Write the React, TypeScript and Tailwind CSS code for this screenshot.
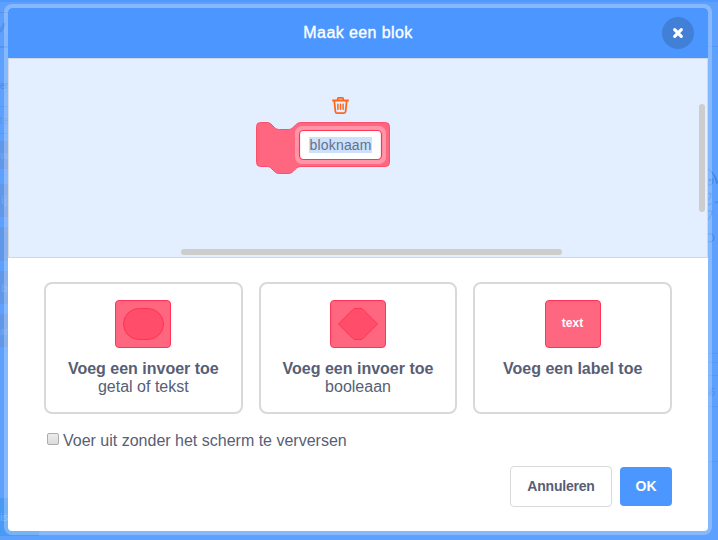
import type { ReactNode } from "react";

function Backdrop() {
  return (
    <svg className="absolute inset-0" width="718" height="540" viewBox="0 0 718 540" fill="none">
      <rect width="718" height="540" fill="#5ea0fe" />
      <rect width="718" height="2" fill="#4f98ff" />
      <rect y="12" width="8" height="1" fill="#5592e8" />
      <path d="M0 32 L5 23" stroke="#5290ea" strokeWidth="3" />
      <rect y="46" width="8" height="2" fill="#5592e8" />
      <g fontSize="11" fontFamily="Liberation Sans, sans-serif">
        <text x="0" y="89" textLength="8" lengthAdjust="spacingAndGlyphs" fill="#4b86dc">er</text>
        <text x="0" y="124" textLength="8" lengthAdjust="spacingAndGlyphs" fill="#5590e5">t e</text>
      </g>
      <rect y="106" width="8" height="1" fill="#5898f5" />
      <rect y="133" width="8" height="1" fill="#5898f5" />
      <g fill="#6097e8">
        <rect y="141" width="8" height="28" />
        <rect y="184" width="8" height="33" />
        <rect y="227" width="8" height="34" />
        <rect y="271" width="8" height="33" />
        <rect y="314" width="8" height="33" />
      </g>
      <g fontSize="11" fontWeight="700" fontFamily="Liberation Sans, sans-serif" fill="#6ea5f3">
        <text x="0" y="159" textLength="8" lengthAdjust="spacingAndGlyphs">va</text>
        <text x="1" y="204">ij</text>
        <text x="1" y="292">b</text>
        <text x="0" y="335" textLength="8" lengthAdjust="spacingAndGlyphs">ar</text>
      </g>
      <rect y="498" width="39" height="38" fill="#4a9af5" />
      <text x="0" y="521" fontSize="11" fontFamily="Liberation Sans, sans-serif" fill="#75b2fb">is</text>
      <rect x="708" y="46" width="10" height="1" fill="#5696f2" />
      <g stroke="#4384e3" strokeWidth="1">
        <path d="M708 169Q714 172 717 184M712 172Q716 176 718 183M708 185Q714 186 713 178M708 194L711 193Q710 201 708 199M708 205L712 203.500M715 202.500L718 202M708 211Q716 209 708 220M708 234Q714 233 714 238Q714 242 708 242" />
      </g>
      <circle cx="710" cy="180" r="1.500" fill="#4384e3" />
      <path d="M708 353.500H718 M708 362.500H718 M708 375.500H718 M708 406.500H718" stroke="#5798f5" />
      <text x="704" y="396" fontSize="10" fontFamily="Liberation Sans, sans-serif" fill="#4f8ee9">56</text>
      <rect x="708" y="461" width="10" height="1" fill="#5798f5" />
    </svg>
  );
}

function TrashIcon() {
  return (
    <svg width="18" height="20" viewBox="0 0 18 20" fill="none" stroke="#ff661a" strokeWidth="2" strokeLinecap="round" strokeLinejoin="round">
      <path d="M2 5.500H17" />
      <path d="M6.700 5V3.600Q6.700 2.900 7.400 2.900H11.500Q12.200 2.900 12.200 3.600V5" strokeWidth="1.700" />
      <path d="M3.300 6L4.400 16.500Q4.600 18.200 6.100 18.200H12.900Q14.400 18.200 14.600 16.500L15.700 6" strokeWidth="1.800" />
      <path d="M6.900 9.200V14.300M9.500 9.200V14.300M12.100 9.200V14.300" strokeWidth="1.500" />
    </svg>
  );
}

function Block() {
  return (
    <svg width="136" height="54" viewBox="0 0 136 54">
      <path
        d="M1.500 5.500Q1.500 1.500 5.500 1.500H12C14.500 1.500 15.500 2.500 17 4L19.500 6.500C21 8 22.500 8.500 24.500 8.500H33C35 8.500 36.500 8 38 6.500L40.500 4C42 2.500 43.500 1.500 46 1.500H130.500Q134.500 1.500 134.500 5.500V41.500Q134.500 45.500 130.500 45.500H46C43.500 45.500 42 46.500 40.500 48L38 50.500C36.500 52 35 52.500 33 52.500H24.500C22.500 52.500 21 52 19.500 50.500L17 48C15.500 46.500 14.500 45.500 12 45.500H5.500Q1.500 45.500 1.500 41.500Z"
        fill="#ff6680"
        stroke="#ff4d6a"
      />
      <rect x="40" y="5" width="91" height="38" rx="7" fill="#ff96a8" />
      <rect x="44.500" y="9.500" width="82" height="29" rx="4" fill="#fff" stroke="#ff3355" strokeWidth="1.200" />
      <rect x="54" y="16" width="63" height="16" fill="#cce2fc" />
      <text x="54.500" y="29" textLength="62" fontSize="14" fontFamily="Liberation Sans, Arial, sans-serif" fill="#66708b">bloknaam</text>
    </svg>
  );
}

function OptionCard({ title, detail, children }: { title: string; detail?: string; children: ReactNode }) {
  return (
    <button className="flex h-[132px] flex-1 flex-col items-center rounded-lg border-2 border-[#d9d9d9] pt-4 text-base leading-[18px]">
      <svg width="56" height="48" viewBox="0 0 56 48">
        <rect x="0.500" y="0.500" width="55" height="47" rx="3.500" fill="#ff6680" stroke="#ff3355" />
        {children}
      </svg>
      <span className="mt-3 font-bold">{title}</span>
      {detail && <span>{detail}</span>}
    </button>
  );
}

export default function App() {
  return (
    <div className="relative h-[540px] w-[718px] overflow-hidden font-['Liberation_Sans',Arial,sans-serif] text-[#575e75]">
      <Backdrop />
      <div className="relative px-1 pt-1">
        <section className="h-[531px] w-[708px] rounded-lg bg-white/25 p-1">
          <div className="flex h-full flex-col overflow-hidden rounded-[4px] bg-white">
            <header className="relative flex h-[50px] shrink-0 items-center justify-center bg-[#4c97ff] text-base text-white">
              <h1 className="tracking-[0.400px] [-webkit-text-stroke:0.350px_#fff]">Maak een blok</h1>
              <button aria-label="Sluiten" className="absolute top-[9px] right-[14px] flex size-8 items-center justify-center rounded-full bg-[#4280d7]">
                <svg width="12" height="12" viewBox="0 0 12 12" stroke="#fff" strokeWidth="3.200" strokeLinecap="round">
                  <path d="M2.700 2.700L9.300 9.300M9.300 2.700L2.700 9.300" />
                </svg>
              </button>
            </header>

            <div className="relative h-[200px] shrink-0 border border-[#d0d7e0] bg-[#e3effe]">
              <div className="flex flex-col pt-9 pl-[246px]">
                <div className="pl-[76px]">
                  <TrashIcon />
                </div>
                <div className="mt-[6px]">
                  <Block />
                </div>
              </div>
              <div className="absolute top-[45px] right-[2px] h-[108px] w-[6px] rounded-full bg-[#cecdce]" />
              <div className="absolute bottom-[2px] left-[172px] h-[6px] w-[381px] rounded-full bg-[#cecdce]" />
            </div>

            <div className="px-9 pt-6">
              <div className="flex gap-4">
                <OptionCard title="Voeg een invoer toe" detail="getal of tekst">
                  <rect x="8.500" y="8.500" width="40" height="31" rx="15.500" fill="#ff4d6a" stroke="#ff3355" />
                </OptionCard>
                <OptionCard title="Voeg een invoer toe" detail="booleaan">
                  <path d="M8.500 24L24 8.500H32L47.500 24L32 39.500H24Z" fill="#ff4d6a" stroke="#ff3355" />
                </OptionCard>
                <OptionCard title="Voeg een label toe">
                  <text x="27.500" y="27" textAnchor="middle" fontSize="12" fontWeight="700" fill="#fff">text</text>
                </OptionCard>
              </div>

              <label className="mt-4 flex h-5 items-center pt-px pl-[3px] text-base">
                <input type="checkbox" className="peer sr-only" />
                <span className="mr-1 mb-[3px] size-3 rounded-[2px] border border-[#acacac] bg-linear-to-b from-[#ececec] to-[#dcdcdc]" />
                Voer uit zonder het scherm te verversen
              </label>

              <div className="mt-4 flex items-center justify-end gap-2 text-sm font-bold">
                <button className="h-[41px] w-[102px] rounded border border-[#d9d9d9] pb-0.5 tracking-[-0.200px]">Annuleren</button>
                <button className="h-[39px] w-[52px] rounded bg-[#4c97ff] pb-0.5 text-white">OK</button>
              </div>
            </div>
          </div>
        </section>
      </div>
    </div>
  );
}
